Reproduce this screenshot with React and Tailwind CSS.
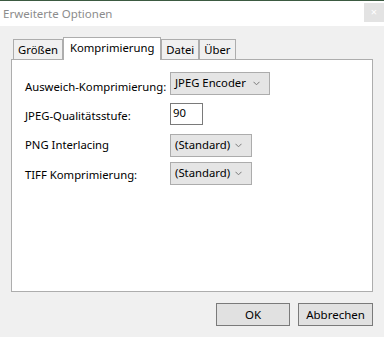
import React from 'react'

const Chevron = () => (
  <svg width="7" height="5" viewBox="0 0 7 5" className="shrink-0">
    <polyline points="0.5,0.8 3.5,3.8 6.5,0.8" fill="none" stroke="#7a7a7a" strokeWidth="1" />
  </svg>
)

const Combo = ({ value, width }) => (
  <div
    className={`h-[23px] ${width} flex items-center justify-between pl-[4px] pr-[9px] bg-[#e5e5e5] border border-[#acacac] text-[11.3px] text-black whitespace-nowrap`}
  >
    <span>{value}</span>
    <Chevron />
  </div>
)

const Tab = ({ label, active }) =>
  active ? (
    <div className="relative z-10 -mb-px h-[23px] px-[6px] pt-[2px] bg-white border border-b-0 border-[#adadad] text-[11.3px] text-black whitespace-nowrap">
      {label}
    </div>
  ) : (
    <div className="h-[20px] px-[4px] pt-[2px] bg-[#f0f0f0] border border-b-0 border-[#adadad] text-[11.3px] leading-[16px] text-black whitespace-nowrap">
      {label}
    </div>
  )

export default function App() {
  return (
    <div
      className="w-[384px] h-[337px] flex flex-col bg-[#f0f0f0] overflow-hidden"
      style={{ fontFamily: '"Noto Sans", "Open Sans", sans-serif' }}
    >
      <div className="h-px bg-[#3b5a41]" />
      <div className="h-[25px] bg-white flex items-center justify-between">
        <span className="pl-[3px] text-[11.5px] text-[#8c8c8c]">Erweiterte Optionen</span>
        <div className="w-[20px] h-[19px] mb-[3px] bg-[#e3e3e3] flex items-center justify-center text-[11px] text-white">
          ×
        </div>
      </div>

      <div className="flex-1 flex flex-col pl-[11px] pr-[11px] pt-[11px]">
        <div className="flex items-end pl-[2px]">
          <Tab label="Größen" />
          <Tab label="Komprimierung" active />
          <Tab label="Datei" />
          <Tab label="Über" />
        </div>

        <div className="h-[233px] bg-white border border-[#adadad] pl-[13px] pt-[12px] flex flex-col text-[11.3px] text-black">
          <div className="flex h-[24px]">
            <span className="w-[145px] pt-[7px] whitespace-nowrap">Ausweich-Komprimierung:</span>
            <Combo value="JPEG Encoder" width="w-[100px]" />
          </div>
          <div className="flex h-[22px] mt-[7px]">
            <span className="w-[145px] pt-[5px] whitespace-nowrap">JPEG-Qualitätsstufe:</span>
            <div className="w-[33px] h-[22px] bg-white border border-[#7a7a7a] pl-[2px] leading-[18px]">90</div>
          </div>
          <div className="flex h-[23px] mt-[9px]">
            <span className="w-[145px] pt-[3px] whitespace-nowrap">PNG Interlacing</span>
            <Combo value="(Standard)" width="w-[82px]" />
          </div>
          <div className="flex h-[23px] mt-[5px]">
            <span className="w-[145px] pt-[5px] whitespace-nowrap">TIFF Komprimierung:</span>
            <Combo value="(Standard)" width="w-[82px]" />
          </div>
        </div>

        <div className="flex justify-end gap-[8px] mt-[11px]">
          <button className="w-[74px] h-[23px] bg-[#e1e1e1] border border-[#7a7a7a] text-[11.5px] text-black">OK</button>
          <button className="w-[75px] h-[23px] bg-[#e1e1e1] border border-[#7a7a7a] text-[11.5px] text-black">Abbrechen</button>
        </div>
      </div>
    </div>
  )
}
